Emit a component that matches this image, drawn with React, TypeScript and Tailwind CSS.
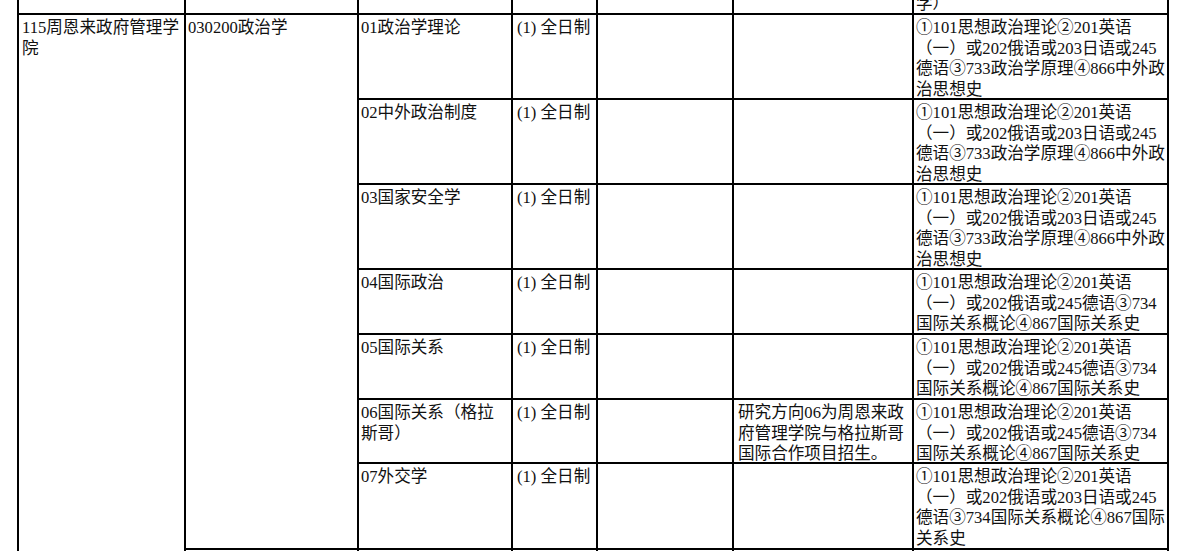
const font = {
  fontFamily: '"Liberation Serif", "Noto Sans CJK SC", serif',
}

const cell = 'border-2 border-black align-top px-[2px] pt-[3px] whitespace-nowrap'

const ansA = [
  '①101思想政治理论②201英语',
  '（一）或202俄语或203日语或245',
  '德语③733政治学原理④866中外政',
  '治思想史',
]
const ansB = [
  '①101思想政治理论②201英语',
  '（一）或202俄语或245德语③734',
  '国际关系概论④867国际关系史',
]
const ansC = [
  '①101思想政治理论②201英语',
  '（一）或202俄语或203日语或245',
  '德语③734国际关系概论④867国际',
  '关系史',
]

const rows = [
  { dir: ['01政治学理论'], note: [], ans: ansA, h: 'h-[85px]' },
  { dir: ['02中外政治制度'], note: [], ans: ansA, h: 'h-[85px]' },
  { dir: ['03国家安全学'], note: [], ans: ansA, h: 'h-[85px]' },
  { dir: ['04国际政治'], note: [], ans: ansB, h: 'h-[65px]' },
  { dir: ['05国际关系'], note: [], ans: ansB, h: 'h-[65px]' },
  {
    dir: ['06国际关系（格拉', '斯哥）'],
    note: ['研究方向06为周恩来政', '府管理学院与格拉斯哥', '国际合作项目招生。'],
    ans: ansB,
    h: 'h-[64px]',
  },
  { dir: ['07外交学'], note: [], ans: ansC, h: 'h-[86px]' },
]

function Lines({ items }: { items: string[] }) {
  return (
    <div className="-mb-[3px]">
      {items.map((t, i) => (
        <div key={i}>{t}</div>
      ))}
    </div>
  )
}

export default function App() {
  return (
    <div
      className="h-[551px] w-[1182px] overflow-hidden bg-white text-[16.6px] leading-[20.6px] text-[#111]"
      style={font}
    >
      <table className="ml-[17px] -mt-[21px] table-fixed border-collapse">
        <colgroup>
          <col className="w-[167px]" />
          <col className="w-[173px]" />
          <col className="w-[154px]" />
          <col className="w-[85px]" />
          <col className="w-[136px]" />
          <col className="w-[180px]" />
          <col className="w-[254px]" />
        </colgroup>
        <tbody>
          <tr className="h-[34px]">
            <td className={cell}></td>
            <td className={cell}></td>
            <td className={cell}></td>
            <td className={cell}></td>
            <td className={cell}></td>
            <td className={cell}></td>
            <td className={`${cell} !align-bottom`}>
              <div className="-mb-[2px]">学）</div>
            </td>
          </tr>
          {rows.map((r, i) => (
            <tr key={i} className={r.h}>
              {i === 0 && (
                <>
                  <td rowSpan={8} className={`${cell} pl-[3px]`}>
                    <Lines items={['115周恩来政府管理学', '院']} />
                  </td>
                  <td rowSpan={7} className={cell}>
                    <Lines items={['030200政治学']} />
                  </td>
                </>
              )}
              <td className={cell}>
                <Lines items={r.dir} />
              </td>
              <td className={`${cell} pl-[4px]`}>
                <Lines items={['(1) 全日制']} />
              </td>
              <td className={cell}></td>
              <td className={`${cell} pl-[4px]`}>
                <Lines items={r.note} />
              </td>
              <td className={cell}>
                <Lines items={r.ans} />
              </td>
            </tr>
          ))}
          <tr className="h-[60px]">
            <td className={cell}></td>
            <td className={cell}></td>
            <td className={cell}></td>
            <td className={cell}></td>
            <td className={cell}></td>
            <td className={cell}></td>
          </tr>
        </tbody>
      </table>
    </div>
  )
}
